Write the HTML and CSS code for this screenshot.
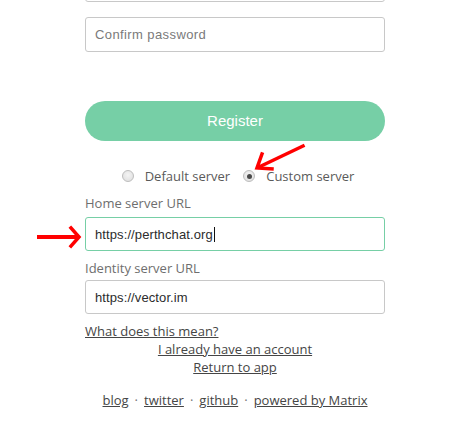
FILE: index.html
```html
<!DOCTYPE html>
<html lang="en">
<head>
<meta charset="utf-8">
<title>Register</title>
<link rel="stylesheet" href="styles.css">
</head>
<body>
<div class="page">
  <form class="form">
    <input class="input input-top" type="password" placeholder="Password">
    <input class="input input-confirm" type="password" placeholder="Confirm password">
    <button type="button" class="register">Register</button>
    <div class="servers">
      <label class="radio-item"><span class="radio"></span><span class="radio-text">Default server</span></label>
      <label class="radio-item"><span class="radio radio-checked"></span><span class="radio-text">Custom server</span></label>
    </div>
    <div class="label label-home">Home server URL</div>
    <div class="input input-focused"><span class="value">https://perthchat.org</span><span class="caret"></span></div>
    <div class="label label-identity">Identity server URL</div>
    <div class="input input-identity"><span class="value">https://vector.im</span></div>
    <a class="link link-help" href="#">What does this mean?</a>
    <div class="center-links">
      <a class="link" href="#">I already have an account</a>
      <a class="link" href="#">Return to app</a>
    </div>
    <div class="footer">
      <a class="link" href="#">blog</a><span class="sep">·</span><a class="link" href="#">twitter</a><span class="sep">·</span><a class="link" href="#">github</a><span class="sep">·</span><a class="link" href="#">powered by Matrix</a>
    </div>
  </form>
  <svg class="arrow arrow-radio" width="60" height="34" viewBox="0 0 60 34">
    <path d="M55 3 L11 24" stroke="#ff0000" stroke-width="3.5" fill="none" stroke-linecap="square"/>
    <path d="M14 11 L9 25 L24 26" stroke="#ff0000" stroke-width="3.5" fill="none" stroke-linecap="square" stroke-linejoin="miter"/>
  </svg>
  <svg class="arrow arrow-home" width="52" height="24" viewBox="0 0 52 24">
    <path d="M2 12 L44 12" stroke="#ff0000" stroke-width="4" fill="none"/>
    <path d="M36 3 L44 12 L36 21" stroke="#ff0000" stroke-width="3.5" fill="none" stroke-linecap="square"/>
  </svg>
</div>
</body>
</html>
```

FILE: styles.css
```css
html, body {
  margin: 0;
  padding: 0;
  background: #ffffff;
}

body {
  font-family: "Open Sans", "Liberation Sans", sans-serif;
  font-size: 13px;
  color: #454545;
  overflow: hidden;
}

.page {
  position: relative;
  width: 465px;
  height: 430px;
}

.form {
  display: flex;
  flex-direction: column;
  width: 300px;
  margin-left: 85px;
}

.input {
  box-sizing: border-box;
  display: flex;
  align-items: center;
  width: 300px;
  height: 34px;
  padding: 0 9px;
  border: 1px solid #c8c8c8;
  border-radius: 3px;
  background: #ffffff;
  font-family: "Liberation Sans", Arial, sans-serif;
  font-size: 13px;
  letter-spacing: 0.1px;
  color: #2c2c2c;
  outline: none;
}

.input::placeholder {
  color: #7a7a7a;
  letter-spacing: 0.4px;
}

.input-top {
  margin-top: -32px;
}

.input-confirm {
  margin-top: 15px;
  height: 35px;
}

.register {
  margin-top: 49px;
  height: 40px;
  border: none;
  border-radius: 20px;
  background: #76cfa6;
  color: #ffffff;
  font-family: "Liberation Sans", Arial, sans-serif;
  font-size: 15px;
  padding: 0 0 2px;
}

.servers {
  display: flex;
  justify-content: center;
  align-items: center;
  margin-top: 26px;
  height: 18px;
  padding-left: 6px;
  color: #5a5a5a;
  line-height: 18px;
}

.radio-item {
  display: flex;
  align-items: center;
}

.radio-item + .radio-item {
  margin-left: 13px;
}

.radio {
  box-sizing: border-box;
  display: inline-block;
  width: 12px;
  height: 12px;
  border-radius: 50%;
  border: 1px solid #bdbdbd;
  background: radial-gradient(circle at 50% 40%, #f4f4f4 0%, #dcdcdc 100%);
  margin-right: 11px;
  position: relative;
}

.radio-checked::after {
  content: "";
  position: absolute;
  left: 2.5px;
  top: 2.5px;
  width: 5px;
  height: 5px;
  border-radius: 50%;
  background: #4a4a4a;
}

.label {
  color: #6e6e6e;
  line-height: 18px;
}

.label-home {
  margin-top: 9px;
}

.input-focused {
  margin-top: 5px;
  border-color: #76cfa6;
}

.caret {
  display: inline-block;
  width: 1px;
  height: 15px;
  background: #111111;
  margin-left: 1px;
}

.label-identity {
  margin-top: 8px;
}

.input-identity {
  margin-top: 3px;
}

.link {
  color: #454545;
  text-decoration: underline;
  line-height: 18px;
}

.link-help {
  margin-top: 8px;
  align-self: flex-start;
}

.center-links {
  display: flex;
  flex-direction: column;
  align-items: center;
}

.footer {
  display: flex;
  justify-content: center;
  margin-top: 15px;
  line-height: 18px;
}

.sep {
  margin: 0 6px;
  color: #777777;
}

.arrow {
  position: absolute;
}

.arrow-radio {
  left: 248px;
  top: 143px;
}

.arrow-home {
  left: 35px;
  top: 225px;
}
```
